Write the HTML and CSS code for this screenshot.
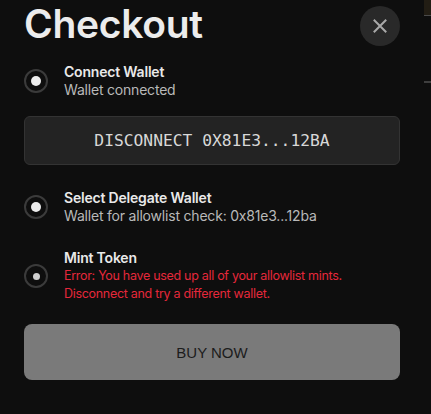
FILE: index.html
```html
<!DOCTYPE html>
<html>
<head>
<meta charset="utf-8" />
<title>Checkout</title>
<link rel="stylesheet" href="styles.css">
</head>
<body>
<div class="edge">
	<div class="edgeTop"></div>
	<div class="edgeLine"></div>
</div>
<div class="checkout">
	<div class="head">
		<h1 class="title">Checkout</h1>
		<div class="close">
			<svg width="16" height="16" viewBox="0 0 16 16"><path d="M2.5 2.5L13.5 13.5M13.5 2.5L2.5 13.5" stroke="#a9a9a9" stroke-width="2" stroke-linecap="square"/></svg>
		</div>
	</div>

	<div class="step step1">
		<div class="radio"><span class="dot"></span></div>
		<div class="info">
			<p class="stepTitle">Connect Wallet</p>
			<p class="stepSub">Wallet connected</p>
		</div>
	</div>

	<div class="disconnect">DISCONNECT 0X81E3...12BA</div>

	<div class="step step2">
		<div class="radio"><span class="dot"></span></div>
		<div class="info">
			<p class="stepTitle">Select Delegate Wallet</p>
			<p class="stepSub">Wallet for allowlist check: 0x81e3...12ba</p>
		</div>
	</div>

	<div class="step step3">
		<div class="radio"><span class="dot small"></span></div>
		<div class="info">
			<p class="stepTitle">Mint Token</p>
			<p class="stepError">Error: You have used up all of your allowlist mints.<br>Disconnect and try a different wallet.</p>
		</div>
	</div>

	<div class="buy">BUY NOW</div>
</div>
</body>
</html>
```

FILE: styles.css
```css
html, body{ margin: 0; padding: 0; background: #0e0e0e; }
body{ width: 431px; height: 414px; overflow: hidden; font-family: Inter, "Liberation Sans", sans-serif; position: relative; }

/* stuff peeking from behind the modal */
.edge{ position: absolute; right: 0; top: 0; width: 7px; height: 90px; }
.edgeTop{ height: 15px; background: #221d14; border-bottom: 1px solid #4a4a4a; }
.edgeLine{ margin-top: 65px; height: 2px; background: #3e3e3e; }

.checkout{ padding: 0 31px 0 24px; display: flex; flex-direction: column; }

.head{ display: flex; justify-content: space-between; align-items: flex-start; height: 48px; }
.title{ margin: 0; font-size: 39px; line-height: 48px; font-weight: 600; color: #ececec; letter-spacing: -0.3px; }
.close{ width: 40px; height: 40px; margin-top: 6px; border-radius: 50%; background: #292929; display: flex; align-items: center; justify-content: center; }

.step{ display: flex; align-items: center; gap: 16px; }
.step p{ margin: 0; }
.radio{ width: 20px; height: 20px; border: 2px solid #3b3b3b; border-radius: 50%; display: flex; align-items: center; justify-content: center; flex-shrink: 0; }
.dot{ width: 10px; height: 10px; border-radius: 50%; background: #ededed; }
.dot.small{ width: 7px; height: 7px; background: #cfcfcf; }
.stepTitle{ font-size: 14px; line-height: 18px; font-weight: 600; color: #e9e9e9; letter-spacing: -0.2px; }
.stepSub{ font-size: 14px; line-height: 18px; color: #b9b9b9; letter-spacing: -0.2px; }
.stepError{ font-size: 12.5px; line-height: 18px; color: #e5283b; letter-spacing: -0.3px; }

.step1{ margin-top: 15px; }
.disconnect{ margin-top: 17px; height: 47px; border: 1px solid #333; border-radius: 6px; background: #232323; color: #d8d8d8; font-family: "DejaVu Sans Mono", "Liberation Mono", monospace; font-size: 16.3px; display: flex; align-items: center; justify-content: center; }
.step2{ margin-top: 24px; }
.step3{ margin-top: 24px; }
.buy{ margin-top: 21px; height: 56px; border-radius: 8px; background: #7a7a7a; color: #1c1c1c; font-family: "Liberation Sans", Arial, sans-serif; font-size: 15px; display: flex; align-items: center; justify-content: center; }
```
